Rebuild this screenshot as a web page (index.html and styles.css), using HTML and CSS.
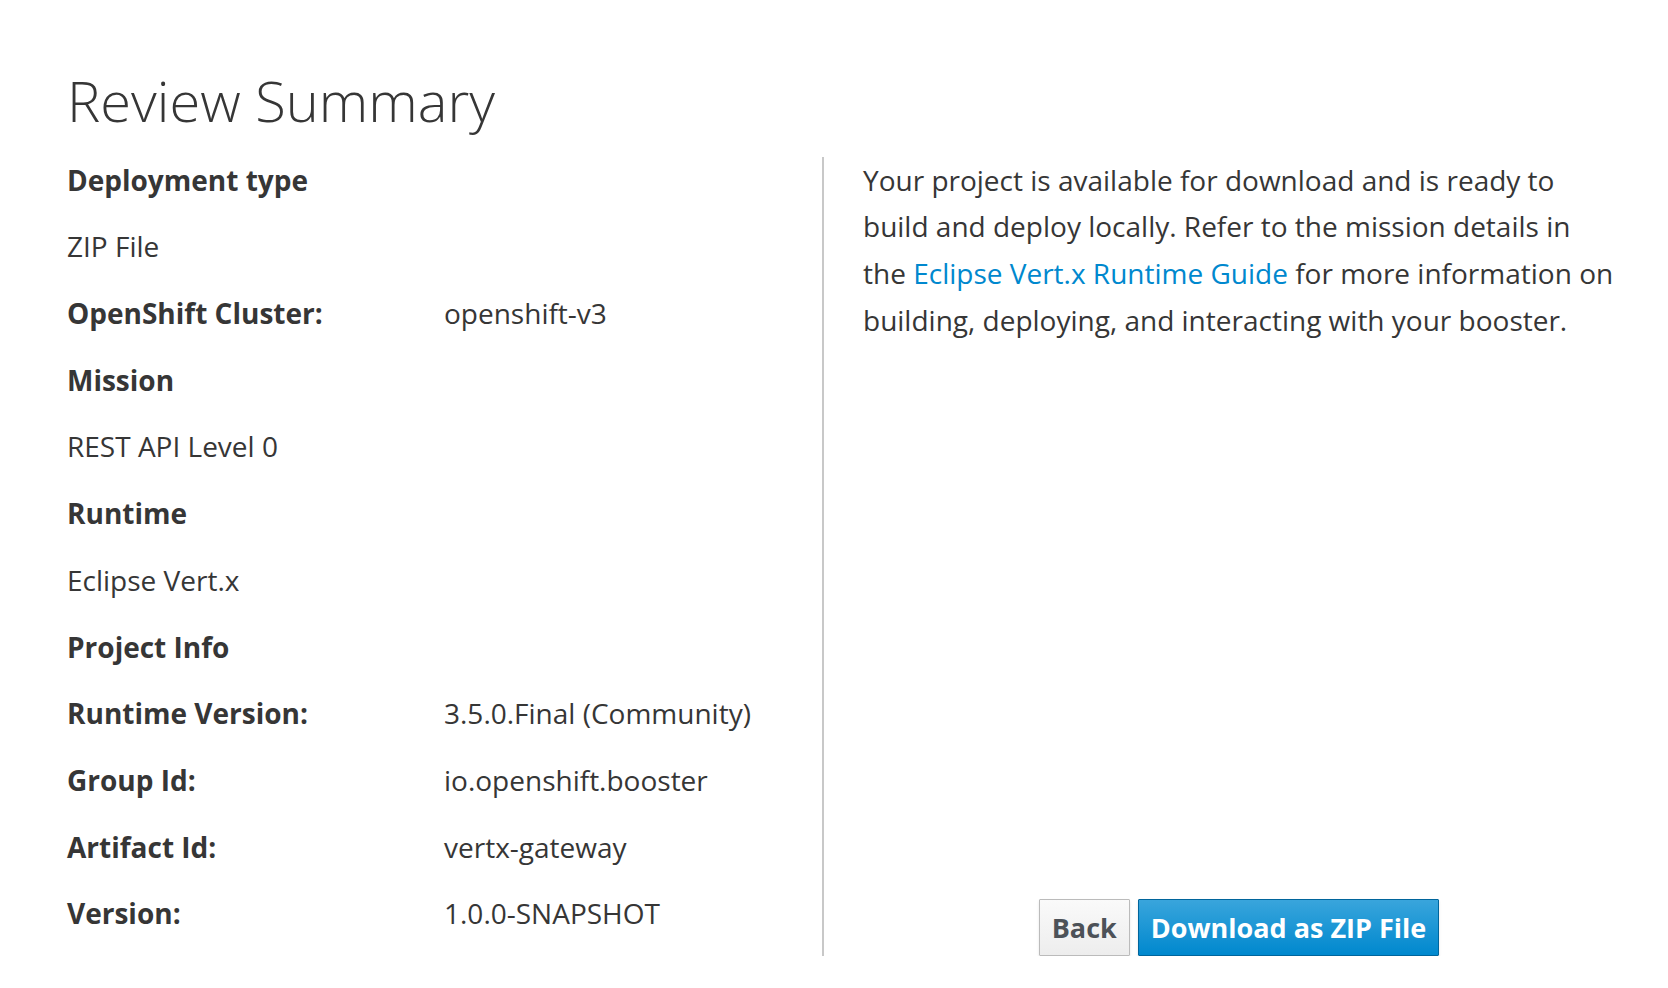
FILE: index.html
```html
<!DOCTYPE html>
<html>
<head>
<meta charset="utf-8">
<link rel="stylesheet" href="styles.css">
</head>
<body>
<div class="page">
  <h1 class="title">Review Summary</h1>
  <div class="content">
    <div class="summary">
      <div class="row full label">Deployment type</div>
      <div class="row full">ZIP File</div>
      <div class="row"><span class="label">OpenShift Cluster:</span><span>openshift-v3</span></div>
      <div class="row full label">Mission</div>
      <div class="row full">REST API Level 0</div>
      <div class="row full label">Runtime</div>
      <div class="row full">Eclipse Vert.x</div>
      <div class="row full label">Project Info</div>
      <div class="row"><span class="label">Runtime Version:</span><span>3.5.0.Final (Community)</span></div>
      <div class="row"><span class="label">Group Id:</span><span>io.openshift.booster</span></div>
      <div class="row"><span class="label">Artifact Id:</span><span>vertx-gateway</span></div>
      <div class="row"><span class="label">Version:</span><span>1.0.0-SNAPSHOT</span></div>
    </div>
    <div class="info">
      <p class="info-text">Your project is available for download and is ready to build and deploy locally. Refer to the mission details in the <a class="link" href="#">Eclipse Vert.x Runtime Guide</a> for more information on building, deploying, and interacting with your booster.</p>
      <div class="actions">
        <button class="btn btn-default">Back</button>
        <button class="btn btn-primary">Download as ZIP File</button>
      </div>
    </div>
  </div>
</div>
</body>
</html>
```

FILE: styles.css
```css
* { box-sizing: border-box; }
html, body {
  margin: 0;
  padding: 0;
  background: #ffffff;
}
body {
  font-family: "Open Sans", "Liberation Sans", sans-serif;
  color: #363636;
  font-size: 28px;
}
.page {
  padding: 0 48px 0 67px;
}
.title {
  margin: 0;
  padding-top: 70px;
  font-size: 56px;
  font-weight: 300;
  line-height: 61.6px;
  color: #363636;
}
.content {
  display: flex;
  margin-top: 25px;
}
.summary {
  width: 757px;
  border-right: 2px solid #c8c8c8;
}
.row {
  display: grid;
  grid-template-columns: 377px 1fr;
  line-height: 46.7px;
  margin-bottom: 20px;
}
.row.full {
  display: block;
}
.row:last-child {
  margin-bottom: 19px;
}
.label {
  font-weight: 700;
}
.info {
  flex: 1;
  display: flex;
  flex-direction: column;
  padding-left: 39px;
}
.info-text {
  margin: 0;
  line-height: 46.7px;
  width: 754px;
}
.link {
  color: #0088ce;
  text-decoration: none;
}
.actions {
  margin-top: auto;
  display: flex;
  justify-content: center;
  gap: 8px;
  width: 752px;
}
.btn {
  font-family: "Open Sans", "Liberation Sans", sans-serif;
  font-size: 27px;
  font-weight: 700;
  height: 57px;
  padding: 0 12px;
  border-radius: 1px;
  border: 1px solid;
  box-shadow: 0 2px 3px rgba(3, 3, 3, 0.1);
}
.btn-default {
  color: #4d5258;
  background: linear-gradient(to bottom, #fafafa 0%, #ededed 100%);
  border-color: #bbbbbb;
}
.btn-primary {
  color: #ffffff;
  background: linear-gradient(to bottom, #39a5dc 0%, #0088ce 100%);
  border-color: #00659c;
}
```
